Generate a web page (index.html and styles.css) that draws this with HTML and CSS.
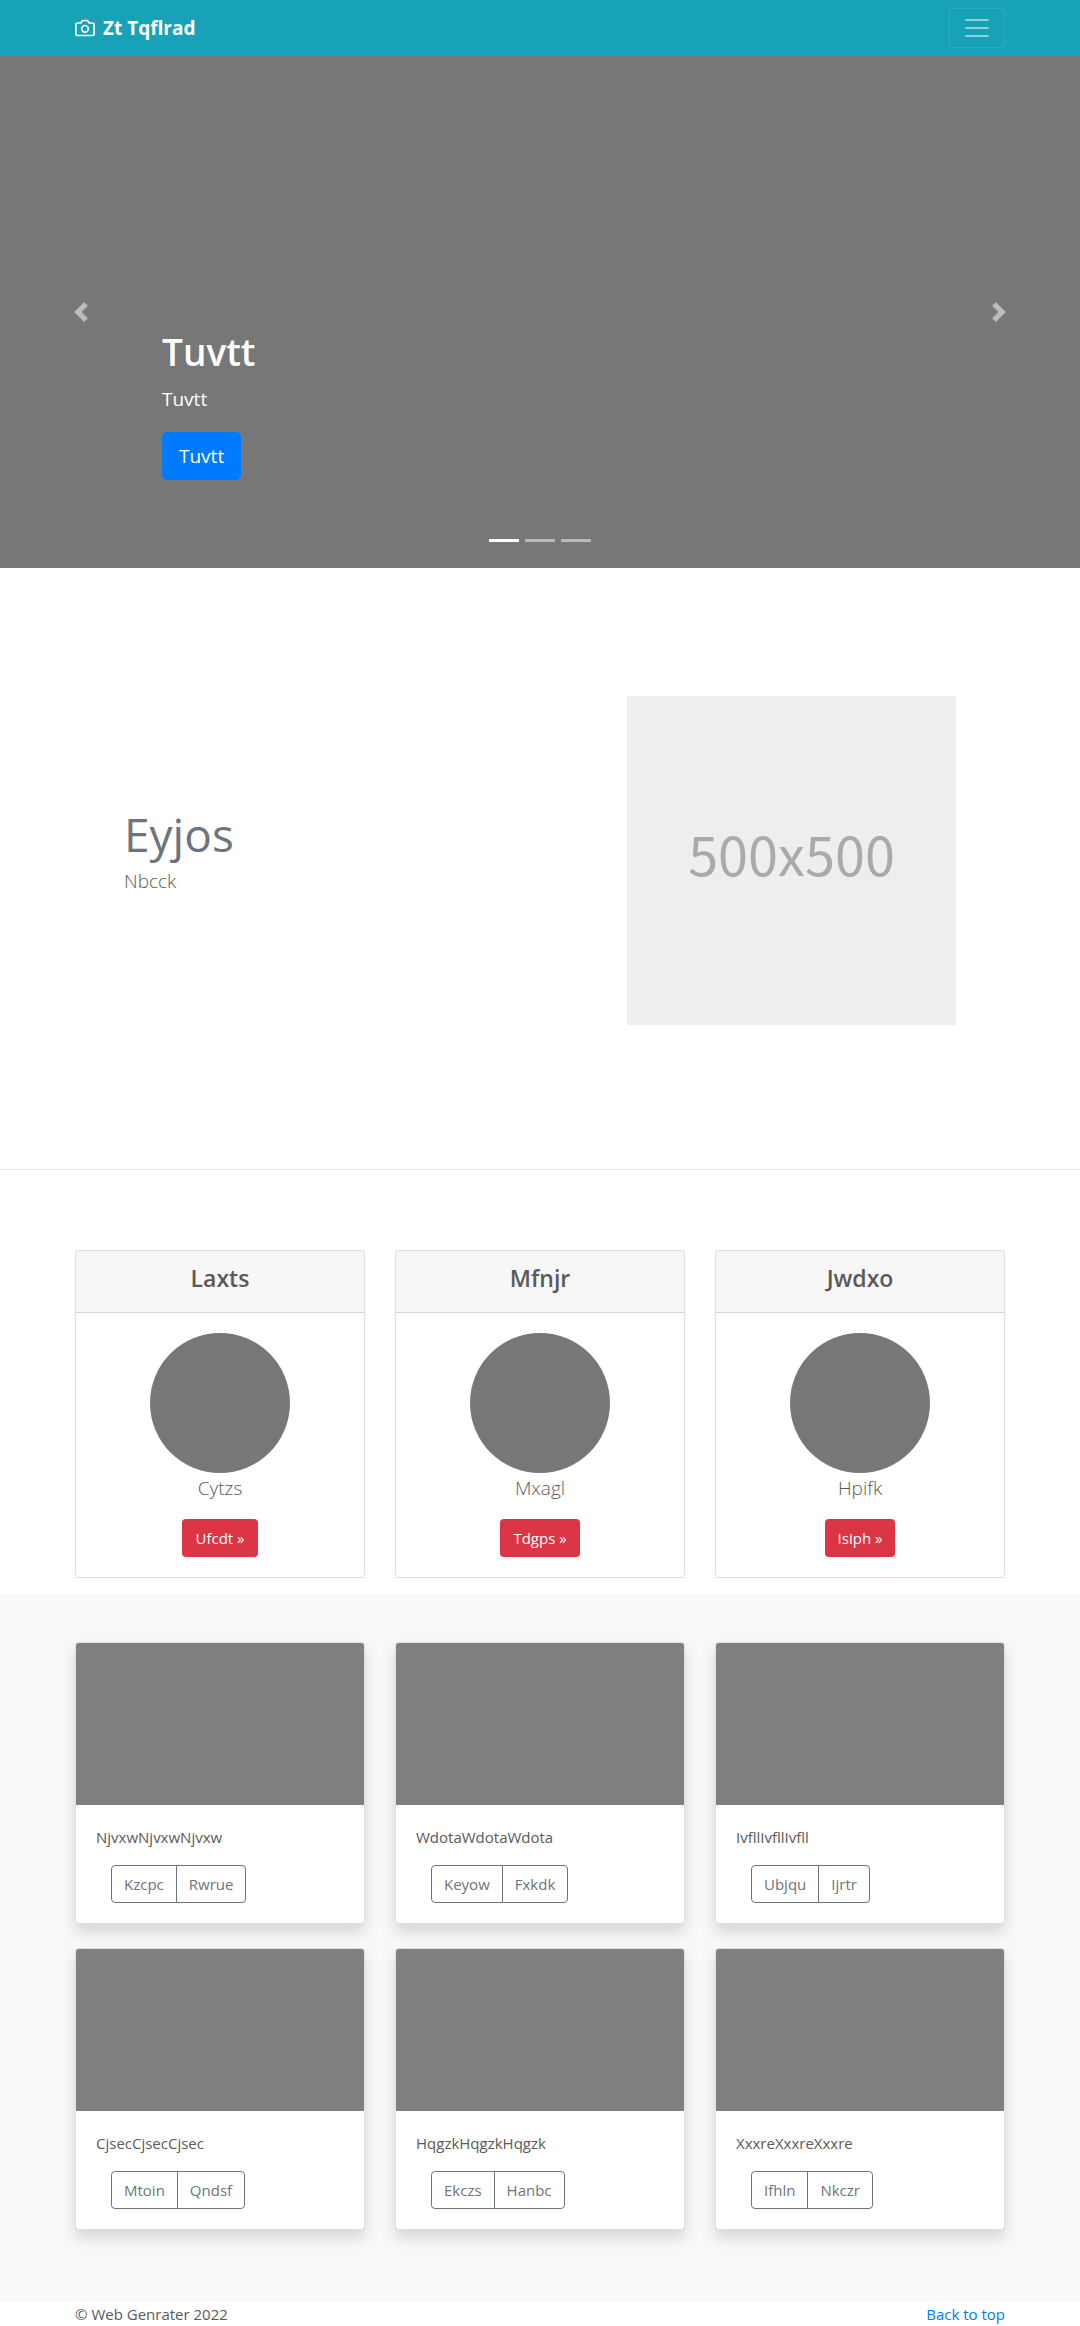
FILE: index.html
```html
<!DOCTYPE html>
<html lang="en">
<head>
<meta charset="utf-8">
<meta name="viewport" content="width=device-width, initial-scale=1">
<title>Zt Tqflrad</title>
<link rel="stylesheet" href="styles.css">
</head>
<body>
<header class="navbar" id="top">
  <div class="container navbar-inner">
    <a class="brand" href="#top">
      <svg class="brand-icon" viewBox="0 0 24 24" fill="none" stroke="currentColor" stroke-width="2" stroke-linecap="round" stroke-linejoin="round" aria-hidden="true"><path d="M23 19a2 2 0 0 1-2 2H3a2 2 0 0 1-2-2V8a2 2 0 0 1 2-2h4l2-3h6l2 3h4a2 2 0 0 1 2 2z"/><circle cx="12" cy="13" r="4"/></svg>
      <strong>Zt Tqflrad</strong>
    </a>
    <button class="toggler" type="button" aria-label="Toggle navigation">
      <svg class="toggler-icon" viewBox="0 0 30 30" stroke="currentColor" stroke-width="2" stroke-linecap="round" stroke-miterlimit="10" aria-hidden="true"><path d="M4 7h22M4 15h22M4 23h22"/></svg>
    </button>
  </div>
</header>

<main>
  <section class="carousel">
    <button class="control control-prev" type="button" aria-label="Previous"><svg viewBox="0 0 8 8" fill="currentColor" aria-hidden="true"><path d="M5.25 0l-4 4 4 4 1.5-1.5L4.25 4l2.5-2.5L5.25 0z"/></svg></button>
    <div class="caption">
      <h1>Tuvtt</h1>
      <p>Tuvtt</p>
      <a class="btn btn-primary" href="#">Tuvtt</a>
    </div>
    <button class="control control-next" type="button" aria-label="Next"><svg viewBox="0 0 8 8" fill="currentColor" aria-hidden="true"><path d="M2.75 0l-1.5 1.5L3.75 4l-2.5 2.5L2.75 8l4-4-4-4z"/></svg></button>
    <div class="indicators">
      <button class="indicator active" type="button" aria-label="Slide 1"></button>
      <button class="indicator" type="button" aria-label="Slide 2"></button>
      <button class="indicator" type="button" aria-label="Slide 3"></button>
    </div>
  </section>

  <section class="feature">
    <div class="container feature-row">
      <div class="feature-text">
        <h2>Eyjos</h2>
        <p class="lead">Nbcck</p>
      </div>
      <div class="placeholder">500x500</div>
    </div>
  </section>
  <hr class="divider">

  <section class="container grid cards">
    <article class="card">
      <header class="card-header"><h4>Laxts</h4></header>
      <div class="card-body centered"><div class="avatar"></div><p class="lead">Cytzs</p><a class="btn btn-danger" href="#">Ufcdt »</a></div>
    </article>
    <article class="card">
      <header class="card-header"><h4>Mfnjr</h4></header>
      <div class="card-body centered"><div class="avatar"></div><p class="lead">Mxagl</p><a class="btn btn-danger" href="#">Tdgps »</a></div>
    </article>
    <article class="card">
      <header class="card-header"><h4>Jwdxo</h4></header>
      <div class="card-body centered"><div class="avatar"></div><p class="lead">Hpifk</p><a class="btn btn-danger" href="#">Isiph »</a></div>
    </article>
  </section>

  <section class="album">
    <div class="container grid album-grid">
      <article class="card shadow"><div class="thumb"></div><div class="card-body"><p>NjvxwNjvxwNjvxw</p><div class="btn-group"><button class="btn btn-outline" type="button">Kzcpc</button><button class="btn btn-outline" type="button">Rwrue</button></div></div></article>
      <article class="card shadow"><div class="thumb"></div><div class="card-body"><p>WdotaWdotaWdota</p><div class="btn-group"><button class="btn btn-outline" type="button">Keyow</button><button class="btn btn-outline" type="button">Fxkdk</button></div></div></article>
      <article class="card shadow"><div class="thumb"></div><div class="card-body"><p>IvfllIvfllIvfll</p><div class="btn-group"><button class="btn btn-outline" type="button">Ubjqu</button><button class="btn btn-outline" type="button">Ijrtr</button></div></div></article>
      <article class="card shadow"><div class="thumb"></div><div class="card-body"><p>CjsecCjsecCjsec</p><div class="btn-group"><button class="btn btn-outline" type="button">Mtoin</button><button class="btn btn-outline" type="button">Qndsf</button></div></div></article>
      <article class="card shadow"><div class="thumb"></div><div class="card-body"><p>HqgzkHqgzkHqgzk</p><div class="btn-group"><button class="btn btn-outline" type="button">Ekczs</button><button class="btn btn-outline" type="button">Hanbc</button></div></div></article>
      <article class="card shadow"><div class="thumb"></div><div class="card-body"><p>XxxreXxxreXxxre</p><div class="btn-group"><button class="btn btn-outline" type="button">Ifhln</button><button class="btn btn-outline" type="button">Nkczr</button></div></div></article>
    </div>
  </section>
</main>

<footer class="container footer">
  <span>© Web Genrater 2022</span>
  <a href="#top">Back to top</a>
</footer>
</body>
</html>
```
FILE: styles.css
```css
*,
*::before,
*::after {
  box-sizing: border-box;
}

body {
  margin: 0;
  font-family: "Open Sans", "Noto Sans", sans-serif;
  font-size: 15px;
  line-height: 24px;
  color: #5a5a5a;
  background: #fff;
}

h1, h2, h4, p {
  margin: 0;
}

a {
  color: #007bff;
  text-decoration: none;
}

button {
  font: inherit;
  cursor: pointer;
}

.container {
  width: 100%;
  max-width: 960px;
  margin: 0 auto;
  padding: 0 15px;
}

/* Navbar */
.navbar {
  padding: 8px 0;
  background: #17a2b8;
}

.navbar-inner {
  display: flex;
  align-items: center;
  justify-content: space-between;
}

.brand {
  display: flex;
  align-items: center;
  gap: 8px;
  color: #fff;
  font-size: 19px;
  line-height: 30px;
}

.brand-icon {
  width: 20px;
  height: 20px;
}

.toggler {
  display: flex;
  padding: 4px 12px;
  color: rgba(255, 255, 255, .5);
  background: none;
  border: 1px solid rgba(255, 255, 255, .1);
  border-radius: 4px;
}

.toggler-icon {
  width: 30px;
  height: 30px;
}

/* Carousel */
.carousel {
  position: relative;
  display: grid;
  grid-template-columns: 15% 1fr 15%;
  align-items: end;
  height: 512px;
  background: #777;
}

.control {
  display: flex;
  align-items: center;
  justify-content: center;
  height: 100%;
  padding: 0;
  color: #fff;
  background: none;
  border: 0;
  opacity: .5;
}

.control svg {
  width: 20px;
  height: 20px;
}

.caption {
  padding-bottom: 88px;
  color: #fff;
}

.caption h1 {
  margin-bottom: 8px;
  font-size: 37px;
  font-weight: 600;
  line-height: 48px;
}

.caption p {
  margin-bottom: 18px;
  font-size: 19px;
  line-height: 30px;
}

.indicators {
  position: absolute;
  right: 0;
  bottom: 26px;
  left: 0;
  display: flex;
  justify-content: center;
  gap: 6px;
}

.indicator {
  width: 30px;
  height: 3px;
  padding: 0;
  background: #fff;
  border: 0;
  opacity: .5;
}

.indicator.active {
  opacity: 1;
}

/* Buttons */
.btn {
  display: inline-block;
  padding: 6px 12px;
  border: 1px solid transparent;
  border-radius: 4px;
  line-height: 24px;
}

.btn-primary {
  display: block;
  width: fit-content;
  padding: 8px 16px;
  border-radius: 5px;
  font-size: 19px;
  line-height: 30px;
  color: #fff;
  background: #007bff;
}

.btn-danger {
  color: #fff;
  background: #dc3545;
}

.btn-outline {
  color: #6c757d;
  background: transparent;
  border-color: #6c757d;
}

.btn-group {
  display: flex;
  margin-left: 15px;
}

.btn-group .btn:first-child {
  border-radius: 4px 0 0 4px;
}

.btn-group .btn:last-child {
  margin-left: -1px;
  border-radius: 0 4px 4px 0;
}

/* Feature */
.feature {
  padding: 128px 0 144px;
}

.feature-row {
  display: grid;
  grid-template-columns: 1fr 329px;
  align-items: center;
  padding: 0 64px;
}

.feature-text {
  padding-bottom: 24px;
}

.feature-text h2 {
  font-size: 46px;
  font-weight: 400;
  line-height: 64px;
  color: #6c757d;
}

.lead {
  font-size: 19px;
  font-weight: 300;
  line-height: 30px;
}

.placeholder {
  display: flex;
  align-items: center;
  justify-content: center;
  aspect-ratio: 1;
  padding-bottom: 16px;
  font-family: "Noto Sans CJK SC", "Open Sans", sans-serif;
  font-size: 54px;
  color: #aaa;
  background: #eee;
}

.divider {
  margin: 0 0 80px;
  border: 0;
  border-top: 1px solid rgba(0, 0, 0, .1);
}

/* Cards */
.grid {
  display: grid;
  grid-template-columns: repeat(3, 1fr);
  column-gap: 30px;
}

.cards {
  margin-bottom: 16px;
}

.card {
  overflow: hidden;
  background: #fff;
  border: 1px solid rgba(0, 0, 0, .125);
  border-radius: 4px;
}

.card-header {
  padding: 12px 20px 18px;
  text-align: center;
  background: rgba(0, 0, 0, .03);
  border-bottom: 1px solid rgba(0, 0, 0, .125);
}

.card-header h4 {
  font-size: 23px;
  font-weight: 600;
  line-height: 31px;
}

.card-body {
  padding: 20px;
}

.card-body p {
  margin-bottom: 16px;
}

.centered {
  display: flex;
  flex-direction: column;
  align-items: center;
}

.avatar {
  width: 140px;
  height: 140px;
  background: #777;
  border-radius: 50%;
}

/* Album */
.album {
  padding: 48px 0 72px;
  background: #f8f9fa;
}

.album-grid {
  row-gap: 24px;
}

.shadow {
  box-shadow: 0 8px 16px rgba(0, 0, 0, .15);
}

.thumb {
  height: 162px;
  background: #808080;
}

.footer {
  display: flex;
  justify-content: space-between;
}
```
